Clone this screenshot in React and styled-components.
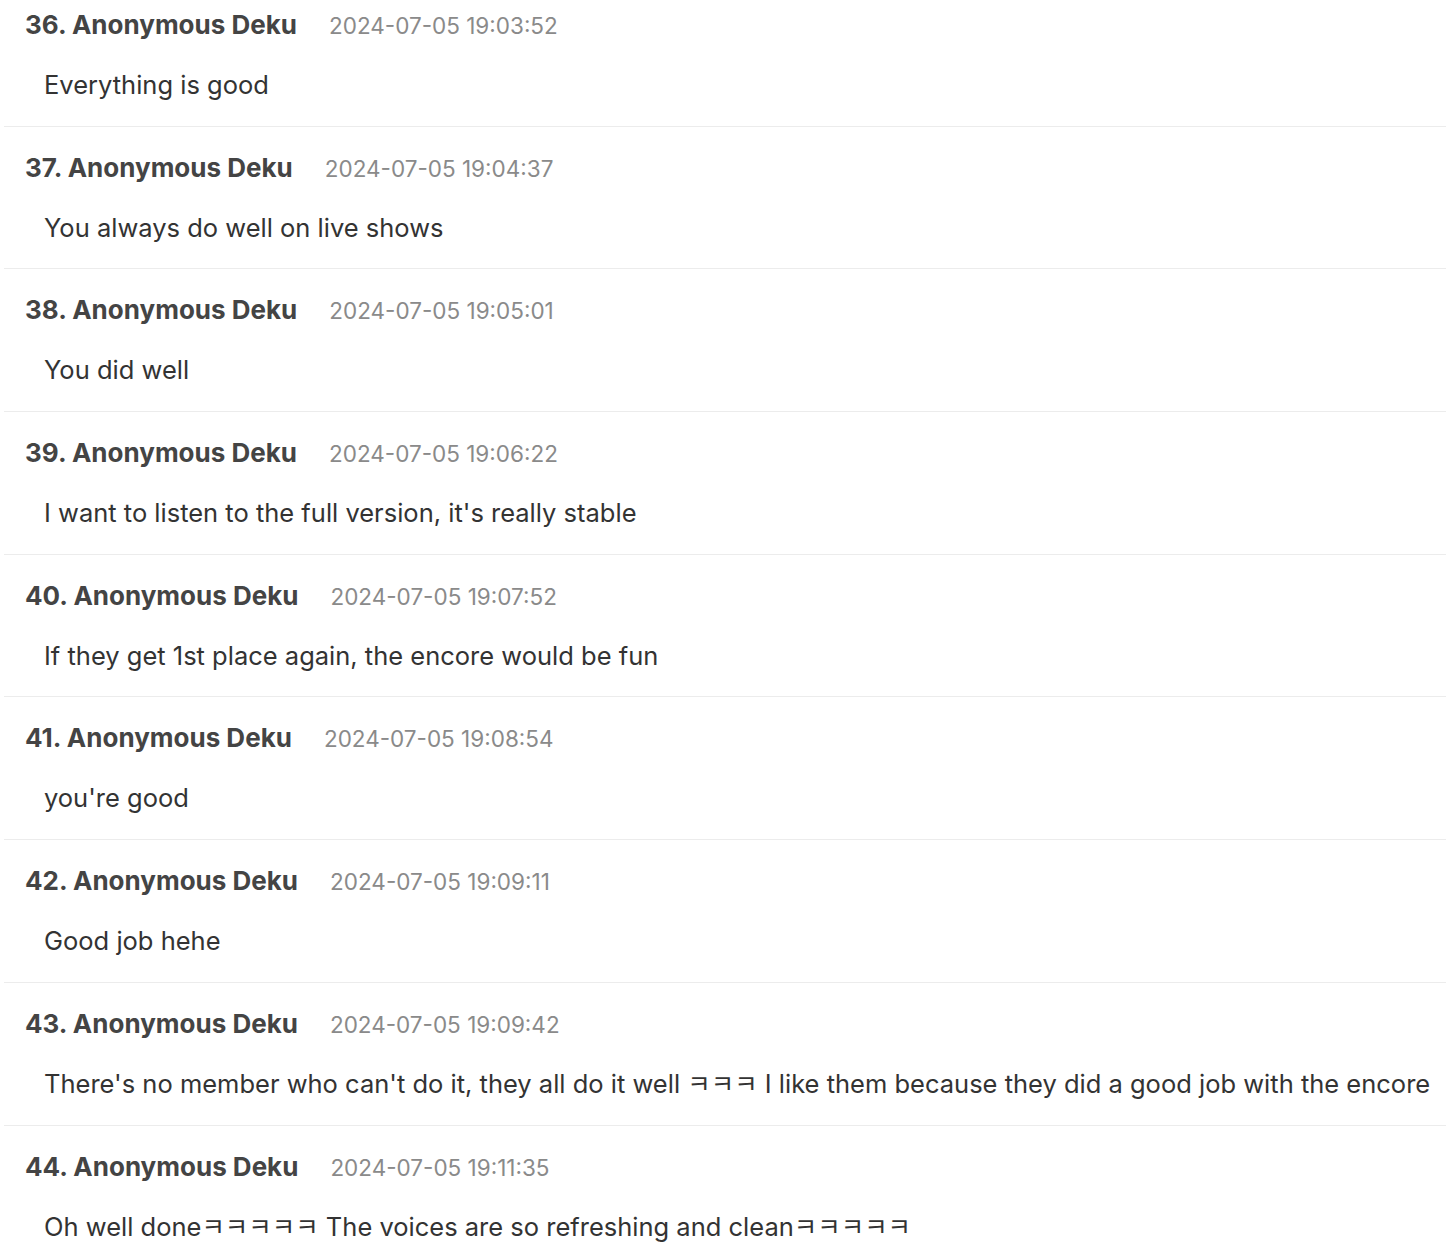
import React from "react"
import styled, { createGlobalStyle } from "styled-components"

const GlobalStyle = createGlobalStyle`
  html, body {
    margin: 0;
    padding: 0;
    background: #fff;
    overflow: hidden;
  }
  body {
    font-family: Inter, "Noto Sans CJK KR", sans-serif;
    -webkit-font-smoothing: antialiased;
  }
`

const List = styled.div`
  margin-top: -16px;
  padding-left: 4px;
`

const Item = styled.div`
  padding: 24px 0 22.7px 21px;
  border-bottom: 1.5px solid #ececec;
`

const Header = styled.div`
  display: flex;
  align-items: baseline;
  gap: 32px;
  line-height: 34px;
`

const Author = styled.span`
  font-size: 26px;
  font-weight: 700;
  color: #444;
`

const Time = styled.span`
  font-size: 22.5px;
  color: #8a8a8a;
`

const Body = styled.p`
  margin: 24px 0 0;
  padding-left: 19px;
  font-size: 25.5px;
  line-height: 36px;
  color: #333;
  white-space: nowrap;
`

const comments = [
  { n: 36, time: "2024-07-05 19:03:52", text: "Everything is good" },
  { n: 37, time: "2024-07-05 19:04:37", text: "You always do well on live shows" },
  { n: 38, time: "2024-07-05 19:05:01", text: "You did well" },
  { n: 39, time: "2024-07-05 19:06:22", text: "I want to listen to the full version, it's really stable" },
  { n: 40, time: "2024-07-05 19:07:52", text: "If they get 1st place again, the encore would be fun" },
  { n: 41, time: "2024-07-05 19:08:54", text: "you're good" },
  { n: 42, time: "2024-07-05 19:09:11", text: "Good job hehe" },
  {
    n: 43,
    time: "2024-07-05 19:09:42",
    text: "There's no member who can't do it, they all do it well ㅋㅋㅋ I like them because they did a good job with the encore",
  },
  {
    n: 44,
    time: "2024-07-05 19:11:35",
    text: "Oh well doneㅋㅋㅋㅋㅋ The voices are so refreshing and cleanㅋㅋㅋㅋㅋ",
  },
]

const App = () => (
  <>
    <GlobalStyle />
    <List>
      {comments.map((c) => (
        <Item key={c.n}>
          <Header>
            <Author>{c.n}. Anonymous Deku</Author>
            <Time>{c.time}</Time>
          </Header>
          <Body>{c.text}</Body>
        </Item>
      ))}
    </List>
  </>
)

export default App
